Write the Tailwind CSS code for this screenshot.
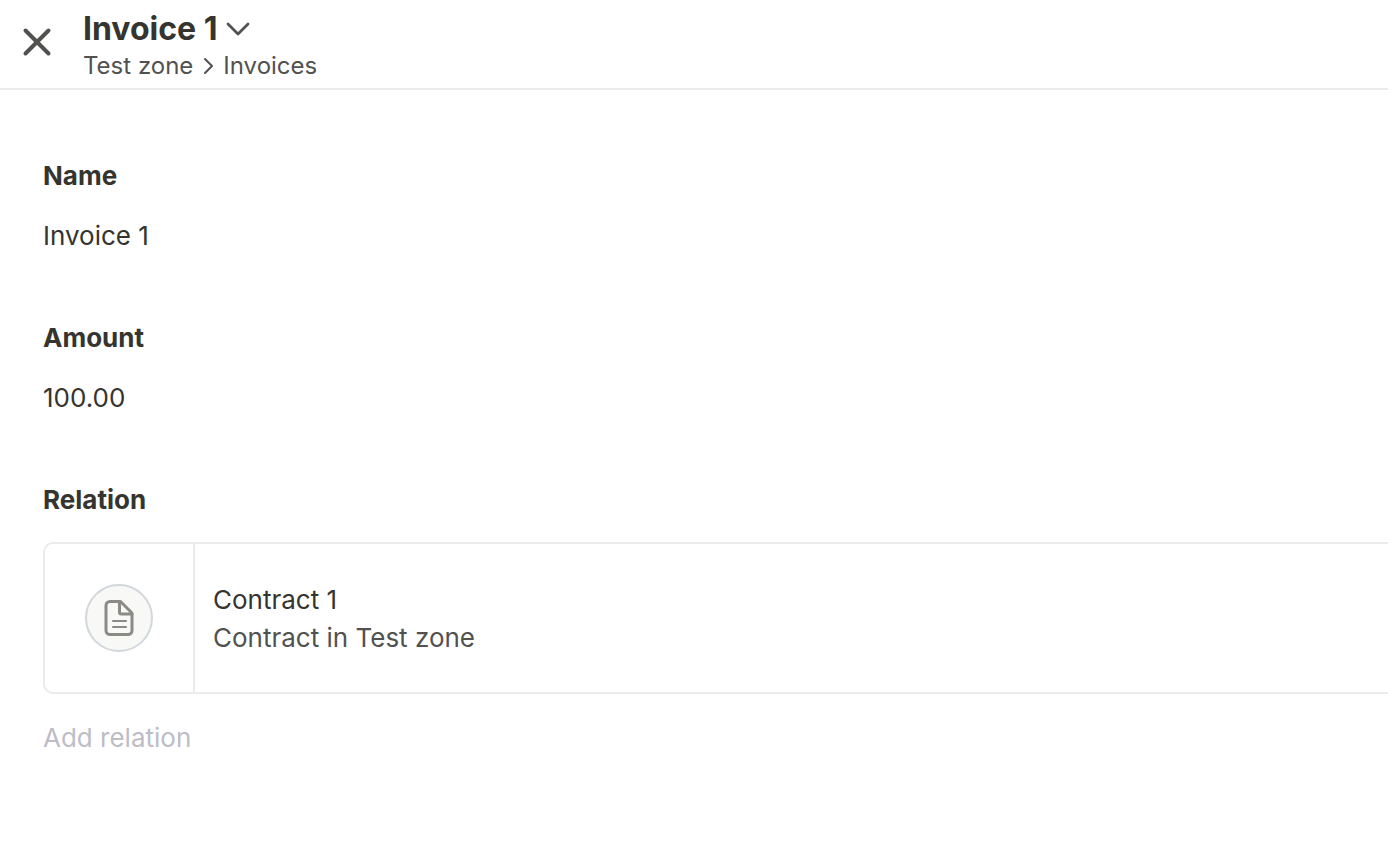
<!DOCTYPE html>
<html lang="en">
<head>
<meta charset="utf-8">
<meta name="viewport" content="width=device-width, initial-scale=1">
<title>Invoice 1</title>
<script src="https://cdn.jsdelivr.net/npm/@tailwindcss/browser@4"></script>
</head>
<body class="min-h-screen overflow-x-hidden bg-white font-['Inter',sans-serif] text-[#35342f]">
<header class="flex h-[90px] items-start border-b-2 border-[#ebebeb]">
  <button type="button" aria-label="Close" class="mt-[27px] ml-[22px] size-[30px] shrink-0 text-[#51514f]">
    <svg viewBox="0 0 30 30" class="size-full" fill="none" stroke="currentColor" stroke-width="4" stroke-linecap="round"><path d="M3.5 3.5 26.5 26.5M26.5 3.5 3.5 26.5"/></svg>
  </button>
  <div class="ml-[31px] pt-[9px]">
    <button type="button" class="flex items-center gap-2">
      <span class="text-[32px] leading-10 font-bold">Invoice 1</span>
      <svg viewBox="0 0 24 16" class="h-4 w-6" fill="none" stroke="#51514f" stroke-width="2.8" stroke-linecap="round" stroke-linejoin="round"><path d="m2 3 10 10L22 3"/></svg>
    </button>
    <nav aria-label="Breadcrumb" class="flex items-center gap-2 text-2xl leading-[34px] text-[#51514f]">
      <a href="#">Test zone</a>
      <svg viewBox="0 0 14 18" class="h-[18px] w-3.5" fill="none" stroke="currentColor" stroke-width="2" stroke-linecap="round" stroke-linejoin="round"><path d="m4 2 7 7-7 7"/></svg>
      <a href="#">Invoices</a>
    </nav>
  </div>
</header>
<main class="pt-[66px] pl-[43px] text-[26px] leading-10">
  <section class="mb-[62px]">
    <h2 class="mb-5 font-bold">Name</h2>
    <p>Invoice 1</p>
  </section>
  <section class="mb-[62px]">
    <h2 class="mb-5 font-bold">Amount</h2>
    <p>100.00</p>
  </section>
  <section>
    <h2 class="mb-[22px] font-bold">Relation</h2>
    <a href="#" class="flex h-[152px] rounded-l-[10px] border-2 border-r-0 border-[#ebebeb]">
      <span class="flex w-[150px] shrink-0 items-center justify-center border-r-2 border-[#ebebeb]">
        <span class="flex size-[68px] items-center justify-center rounded-full border-2 border-[#d1d7db] bg-[#f8f8f7]">
          <svg viewBox="0 0 30 38" class="h-[38px] w-[30px]" fill="none" stroke="#8b8a86" stroke-width="3" stroke-linecap="round" stroke-linejoin="round"><path d="M16 2.5H6a4 4 0 0 0-4 4v25a4 4 0 0 0 4 4h18a4 4 0 0 0 4-4V15q0-1-1-2L18 4q-1-1.500-2-1.500Z"/><path d="M15.500 3v10a2 2 0 0 0 2 2H28"/><path stroke-width="2" d="M9 22h13M9 28h13"/></svg>
        </span>
      </span>
      <span class="flex flex-col justify-center pt-0.5 pl-[18px] leading-[38px]">
        <span>Contract 1</span>
        <span class="text-[#51514f]">Contract in Test zone</span>
      </span>
    </a>
    <button type="button" class="mt-6 block text-[#bdbdc7]">Add relation</button>
  </section>
</main>
</body>
</html>
